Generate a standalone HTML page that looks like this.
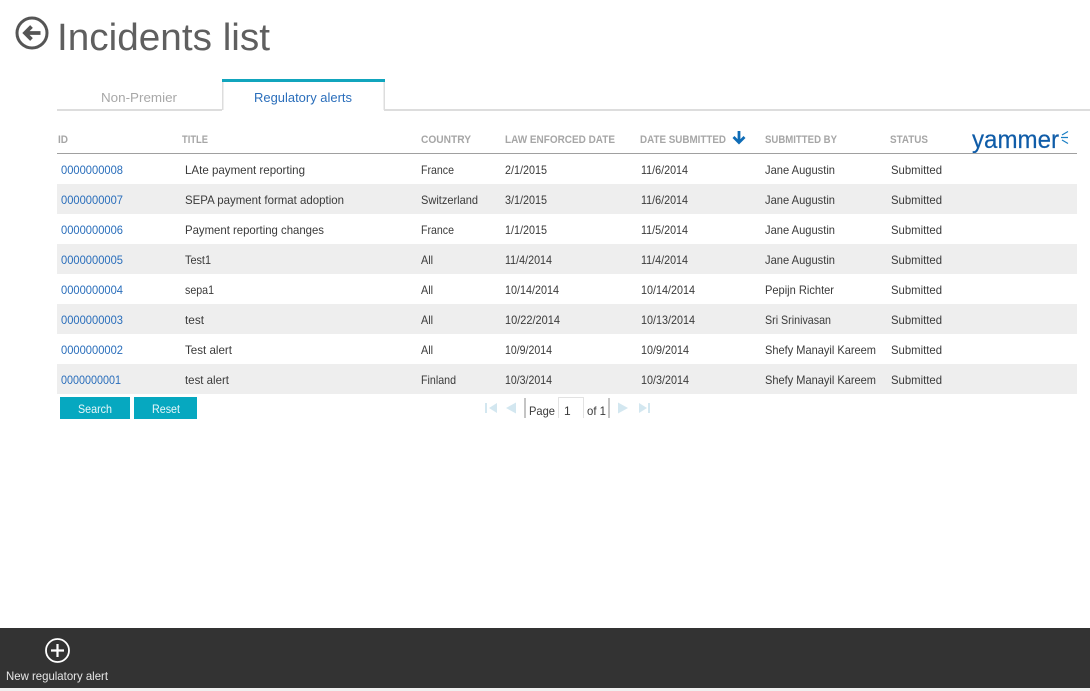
<!DOCTYPE html>
<html><head><meta charset="utf-8"><title>Incidents list</title>
<style>
html,body{margin:0;padding:0;background:#fff;overflow:hidden;width:1090px;height:691px}
svg{display:block;position:absolute;left:0;top:0}
text{font-family:"Liberation Sans",sans-serif;font-size:12px;fill:#3a3a3a}
.l{fill:#2a6ebb}
.h{font-size:11px;font-weight:bold;fill:#a6a6a6}
</style></head><body>
<svg width="1090" height="691" viewBox="0 0 1090 691" xmlns="http://www.w3.org/2000/svg">
<!-- back -->
<circle cx="32" cy="33" r="15" fill="none" stroke="#555" stroke-width="3"/>
<path d="M40.500 33H25M31.500 26.500L25 33L31.500 39.500" fill="none" stroke="#555" stroke-width="3.800"/>
<text x="57" y="50" style="font-size:38px;fill:#5f5f5f" textLength="213" lengthAdjust="spacingAndGlyphs">Incidents list</text>
<!-- tabs -->
<rect x="57" y="109" width="165" height="2" fill="#ddd"/>
<rect x="384" y="109" width="706" height="2" fill="#ddd"/>
<rect x="222" y="81" width="1.500" height="29" fill="#ddd"/>
<rect x="383.500" y="81" width="1.500" height="29" fill="#ddd"/>
<rect x="222" y="79" width="163" height="3" fill="#11a5bd"/>
<text x="101" y="102" style="font-size:13px;fill:#a8a8a8" textLength="76" lengthAdjust="spacingAndGlyphs">Non-Premier</text>
<text x="254" y="102" style="font-size:13px;fill:#2a6ebb" textLength="98" lengthAdjust="spacingAndGlyphs">Regulatory alerts</text>
<!-- head -->
<text class="h" x="58" y="143" textLength="10" lengthAdjust="spacingAndGlyphs">ID</text>
<text class="h" x="182" y="143" textLength="26" lengthAdjust="spacingAndGlyphs">TITLE</text>
<text class="h" x="421" y="143" textLength="50" lengthAdjust="spacingAndGlyphs">COUNTRY</text>
<text class="h" x="505" y="143" textLength="110" lengthAdjust="spacingAndGlyphs">LAW ENFORCED DATE</text>
<text class="h" x="640" y="143" textLength="86" lengthAdjust="spacingAndGlyphs">DATE SUBMITTED</text>
<path d="M739 131V142M733.500 137L739 142.500L744.500 137" fill="none" stroke="#0f6cb6" stroke-width="2.800"/>
<text class="h" x="765" y="143" textLength="72" lengthAdjust="spacingAndGlyphs">SUBMITTED BY</text>
<text class="h" x="890" y="143" textLength="38" lengthAdjust="spacingAndGlyphs">STATUS</text>
<text x="972" y="148" style="font-size:25px;fill:#0f5ca8;stroke:#0f5ca8;stroke-width:.2" textLength="87" lengthAdjust="spacingAndGlyphs">yammer</text>
<path d="M1068 131.500L1062 135M1061 137.500H1068M1062 140L1068 143.500" fill="none" stroke="#1a7fc4" stroke-width="1.200"/>
<rect x="57" y="153" width="1020" height="1" fill="#a0a0a0"/>
<!-- stripes -->
<rect x="57" y="184" width="1020" height="30" fill="#eee"/>
<rect x="57" y="244" width="1020" height="30" fill="#eee"/>
<rect x="57" y="304" width="1020" height="30" fill="#eee"/>
<rect x="57" y="364" width="1020" height="30" fill="#eee"/>
<!-- rows -->
<g>
<text class="l" x="61" y="174" textLength="62" lengthAdjust="spacingAndGlyphs">0000000008</text><text x="185" y="174" textLength="120" lengthAdjust="spacingAndGlyphs">LAte payment reporting</text><text x="421" y="174" textLength="33" lengthAdjust="spacingAndGlyphs">France</text><text x="505" y="174" textLength="42" lengthAdjust="spacingAndGlyphs">2/1/2015</text><text x="641" y="174" textLength="47" lengthAdjust="spacingAndGlyphs">11/6/2014</text><text x="765" y="174" textLength="70" lengthAdjust="spacingAndGlyphs">Jane Augustin</text><text x="891" y="174" textLength="51" lengthAdjust="spacingAndGlyphs">Submitted</text>
<text class="l" x="61" y="204" textLength="62" lengthAdjust="spacingAndGlyphs">0000000007</text><text x="185" y="204" textLength="159" lengthAdjust="spacingAndGlyphs">SEPA payment format adoption</text><text x="421" y="204" textLength="57" lengthAdjust="spacingAndGlyphs">Switzerland</text><text x="505" y="204" textLength="42" lengthAdjust="spacingAndGlyphs">3/1/2015</text><text x="641" y="204" textLength="47" lengthAdjust="spacingAndGlyphs">11/6/2014</text><text x="765" y="204" textLength="70" lengthAdjust="spacingAndGlyphs">Jane Augustin</text><text x="891" y="204" textLength="51" lengthAdjust="spacingAndGlyphs">Submitted</text>
<text class="l" x="61" y="234" textLength="62" lengthAdjust="spacingAndGlyphs">0000000006</text><text x="185" y="234" textLength="139" lengthAdjust="spacingAndGlyphs">Payment reporting changes</text><text x="421" y="234" textLength="33" lengthAdjust="spacingAndGlyphs">France</text><text x="505" y="234" textLength="42" lengthAdjust="spacingAndGlyphs">1/1/2015</text><text x="641" y="234" textLength="47" lengthAdjust="spacingAndGlyphs">11/5/2014</text><text x="765" y="234" textLength="70" lengthAdjust="spacingAndGlyphs">Jane Augustin</text><text x="891" y="234" textLength="51" lengthAdjust="spacingAndGlyphs">Submitted</text>
<text class="l" x="61" y="264" textLength="62" lengthAdjust="spacingAndGlyphs">0000000005</text><text x="185" y="264" textLength="26" lengthAdjust="spacingAndGlyphs">Test1</text><text x="421" y="264" textLength="12" lengthAdjust="spacingAndGlyphs">All</text><text x="505" y="264" textLength="47" lengthAdjust="spacingAndGlyphs">11/4/2014</text><text x="641" y="264" textLength="47" lengthAdjust="spacingAndGlyphs">11/4/2014</text><text x="765" y="264" textLength="70" lengthAdjust="spacingAndGlyphs">Jane Augustin</text><text x="891" y="264" textLength="51" lengthAdjust="spacingAndGlyphs">Submitted</text>
<text class="l" x="61" y="294" textLength="62" lengthAdjust="spacingAndGlyphs">0000000004</text><text x="185" y="294" textLength="29" lengthAdjust="spacingAndGlyphs">sepa1</text><text x="421" y="294" textLength="12" lengthAdjust="spacingAndGlyphs">All</text><text x="505" y="294" textLength="54" lengthAdjust="spacingAndGlyphs">10/14/2014</text><text x="641" y="294" textLength="54" lengthAdjust="spacingAndGlyphs">10/14/2014</text><text x="765" y="294" textLength="69" lengthAdjust="spacingAndGlyphs">Pepijn Richter</text><text x="891" y="294" textLength="51" lengthAdjust="spacingAndGlyphs">Submitted</text>
<text class="l" x="61" y="324" textLength="62" lengthAdjust="spacingAndGlyphs">0000000003</text><text x="185" y="324" textLength="19" lengthAdjust="spacingAndGlyphs">test</text><text x="421" y="324" textLength="12" lengthAdjust="spacingAndGlyphs">All</text><text x="505" y="324" textLength="55" lengthAdjust="spacingAndGlyphs">10/22/2014</text><text x="641" y="324" textLength="54" lengthAdjust="spacingAndGlyphs">10/13/2014</text><text x="765" y="324" textLength="66" lengthAdjust="spacingAndGlyphs">Sri Srinivasan</text><text x="891" y="324" textLength="51" lengthAdjust="spacingAndGlyphs">Submitted</text>
<text class="l" x="61" y="354" textLength="62" lengthAdjust="spacingAndGlyphs">0000000002</text><text x="185" y="354" textLength="47" lengthAdjust="spacingAndGlyphs">Test alert</text><text x="421" y="354" textLength="12" lengthAdjust="spacingAndGlyphs">All</text><text x="505" y="354" textLength="47" lengthAdjust="spacingAndGlyphs">10/9/2014</text><text x="641" y="354" textLength="48" lengthAdjust="spacingAndGlyphs">10/9/2014</text><text x="765" y="354" textLength="111" lengthAdjust="spacingAndGlyphs">Shefy Manayil Kareem</text><text x="891" y="354" textLength="51" lengthAdjust="spacingAndGlyphs">Submitted</text>
<text class="l" x="61" y="384" textLength="60" lengthAdjust="spacingAndGlyphs">0000000001</text><text x="185" y="384" textLength="44" lengthAdjust="spacingAndGlyphs">test alert</text><text x="421" y="384" textLength="35" lengthAdjust="spacingAndGlyphs">Finland</text><text x="505" y="384" textLength="47" lengthAdjust="spacingAndGlyphs">10/3/2014</text><text x="641" y="384" textLength="48" lengthAdjust="spacingAndGlyphs">10/3/2014</text><text x="765" y="384" textLength="111" lengthAdjust="spacingAndGlyphs">Shefy Manayil Kareem</text><text x="891" y="384" textLength="51" lengthAdjust="spacingAndGlyphs">Submitted</text>
</g>
<!-- buttons -->
<rect x="60" y="397" width="70" height="22" fill="#06a8c0"/>
<rect x="134" y="397" width="63" height="22" fill="#06a8c0"/>
<text x="78" y="413" style="fill:#e8f7fa" textLength="34" lengthAdjust="spacingAndGlyphs">Search</text>
<text x="152" y="413" style="fill:#e8f7fa" textLength="28" lengthAdjust="spacingAndGlyphs">Reset</text>
<!-- pager -->
<g fill="#d3e7f0">
<rect x="485" y="403" width="2" height="10"/><path d="M497 403V413L489 408Z"/>
<path d="M516 402.500V413.500L506 408Z"/>
<path d="M618 402.500V413.500L628 408Z"/>
<path d="M639 403V413L647 408Z"/><rect x="648" y="403" width="2" height="10"/>
</g>
<rect x="524" y="398" width="2" height="20" fill="#c4c4c4"/>
<rect x="608" y="398" width="2" height="20" fill="#c4c4c4"/>
<text x="529" y="415" textLength="26" lengthAdjust="spacingAndGlyphs">Page</text>
<path d="M558.500 418V397.500H583.500V418" fill="none" stroke="#e2e2e2"/>
<text x="564" y="415">1</text>
<text x="587" y="415" textLength="19" lengthAdjust="spacingAndGlyphs">of 1</text>
<!-- bottom bar -->
<rect x="0" y="628" width="1090" height="60" fill="#333"/>
<rect x="0" y="688" width="1090" height="3" fill="#f0f0f0"/>
<circle cx="57.500" cy="650.500" r="11.500" fill="none" stroke="#fff" stroke-width="1.800"/>
<path d="M57.500 644V657M51 650.500H64" fill="none" stroke="#fff" stroke-width="2.200"/>
<text x="6" y="680" style="fill:#e6e6e6" textLength="102" lengthAdjust="spacingAndGlyphs">New regulatory alert</text>
</svg>
</body></html>
